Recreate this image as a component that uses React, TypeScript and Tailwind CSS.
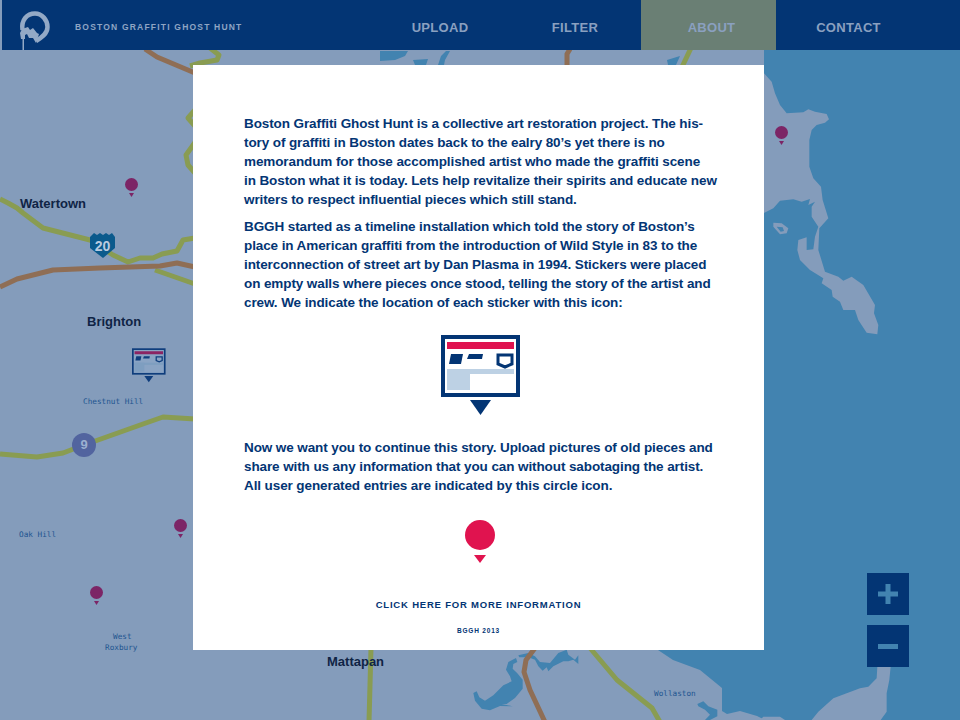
const navItems = [
  { label: "UPLOAD", cell: "w-[138px]" },
  { label: "FILTER", cell: "w-[132px]" },
  { label: "ABOUT", cell: "w-[135px] bg-[#6a7f74] pl-[6px] text-[#7d96b8]" },
  { label: "CONTACT", cell: "w-[145px]" },
];

const pins = [
  { id: 1, className: "left-[125px] top-[178px]" },
  { id: 2, className: "left-[775px] top-[126px]" },
  { id: 3, className: "left-[174px] top-[519px]" },
  { id: 4, className: "left-[90px] top-[586px]" },
];

const labels = [
  { text: "Chestnut Hill", className: "left-[83px] top-[397px]" },
  { text: "Oak Hill", className: "left-[19px] top-[530px]" },
  { text: "West", className: "left-[113px] top-[632px]" },
  { text: "Roxbury", className: "left-[105px] top-[643px]" },
  { text: "Wollaston", className: "left-[654px] top-[689px]" },
];

const towns = [
  { text: "Watertown", className: "left-[20px] top-[196px]" },
  { text: "Brighton", className: "left-[87px] top-[314px]" },
  { text: "Mattapan", className: "left-[327px] top-[654px]" },
];

const Logo = () => (
  <svg viewBox="0 0 52 50" className="h-[50px] w-[52px] shrink-0">
    <path
      d="M22.500 30 C21 20 27 13.500 35 13.500 C42 13.500 47.500 20 47.500 27 C47.500 34 41 38 36 41"
      fill="none"
      stroke="#93a9c6"
      strokeWidth="4.500"
    />
    <path
      d="M20 33 L22 29 L28 27 L30 30 L33 28 L37 33 L39 34 L36 43 L33 38 L29 38 L27 34 L25 35 L25 39 L21 39 Z"
      fill="#93a9c6"
    />
    <rect x="22.500" y="38" width="1.500" height="12" fill="#93a9c6" />
  </svg>
);

const Sticker = ({
  frame,
  bar,
  light,
  fill,
  className,
}: {
  frame: string;
  bar: string;
  light: string;
  fill: string;
  className: string;
}) => (
  <svg viewBox="0 0 80 81" className={className}>
    <rect x="2" y="2" width="75" height="58" fill={fill} stroke={frame} strokeWidth="4" />
    <rect x="6" y="7" width="67" height="7" fill={bar} />
    <rect x="6" y="34" width="67" height="5" fill={light} />
    <rect x="6" y="34" width="23" height="21" fill={light} />
    <path d="M8 29 L10 19 L22 19 L20 29 Z" fill={frame} />
    <path d="M26 24 L28 19 L42 19 L41 24 Z" fill={frame} />
    <path d="M57 20 H71 V29 L64 32 L57 29 Z" fill={fill} stroke={frame} strokeWidth="3" />
    <path d="M29 65 H50 L39.500 80 Z" fill={frame} />
  </svg>
);

const MapArt = () => (
  <svg viewBox="0 0 960 720" className="absolute inset-0 h-[720px] w-[960px]">
    <path
      d="M764 50 H960 V720 H765 L757 716 L740 711 L727 714 L722 711 L722 688 L700 670 L673 660 L658 650 H764 Z"
      fill="#4283b0"
    />
    <g transform="translate(760 50) scale(0.3333)" fill="#849cbb">
      <path d="M0 60 L12 70 L35 95 L45 130 L60 165 L80 190 L130 187 L145 178 L165 185 L200 192 L207 208 L195 218 L170 225 L155 240 L148 270 L148 350 L160 385 L183 410 L188 450 L205 505 L178 535 L175 600 L195 665 L235 680 L250 692 L275 680 L310 705 L345 765 L342 790 L355 825 L352 853 L320 848 L295 810 L285 780 L250 780 L240 755 L218 740 L215 720 L185 700 L190 685 L150 660 L120 630 L112 600 L115 570 L140 562 L140 600 L160 598 L165 560 L175 530 L155 500 L155 470 L165 455 L145 465 L150 447 L125 455 L100 448 L60 452 L40 475 L0 495 Z" />
      <path
        fillRule="evenodd"
        d="M40 518 L65 520 L85 535 L80 550 L60 553 L40 530 Z M50 530 L62 545 L72 543 L68 532 Z"
      />
    </g>
    <g transform="translate(760 520) scale(0.3333)" fill="#849cbb">
      <path d="M352 440 H392 L388 480 L380 520 L380 575 L362 600 H155 L175 575 L220 535 L300 505 L325 500 L350 475 Z" />
      <path d="M0 600 L10 590 L60 590 L75 600 Z" />
    </g>

    <g fill="#4283b0">
      <path d="M380 51 L408 51 L405 56 L395 60 L380 61 Z" />
      <path d="M413 60 L428 59 L426 65 L415 65 Z" />
      <path d="M438 65 L441 56 L446 51 L450 51 L445 60 L444 65 Z" />
      <path d="M667 60 L680 56 L676 65 L668 65 Z" />
      <g transform="translate(640 648) scale(0.3333)">
        <path d="M172 168 L190 160 L205 175 L232 185 L232 205 L210 216 L195 216 L210 200 L195 185 L175 175 Z" />
      </g>
      <g transform="translate(460 648) scale(0.3333)">
        <path d="M168 30 L172 42 L160 48 L158 62 L172 76 L188 95 L188 122 L165 150 L140 168 L125 168 L158 175 L120 174 L90 187 L65 182 L45 158 L40 135 L50 130 L58 148 L75 158 L100 142 L130 112 L155 100 L150 85 L138 65 L145 42 Z" />
        <path d="M175 22 L205 15 L225 25 L240 42 L270 45 L295 15 L320 5 L325 20 L345 35 L355 22 L355 48 L340 35 L325 40 L310 40 L280 55 L265 70 L260 58 L248 68 L235 55 L225 35 L205 28 L178 28 Z" />
      </g>
    </g>

    <g fill="none" stroke="#899c52" strokeWidth="5" strokeLinejoin="round">
      <path d="M210 48 L219 55 L217 60 L200 63 L190 66" />
      <path d="M195 110 L188 118 L195 126" />
      <path d="M196 141 L186 155 L188 165 L195 173" />
      <path d="M0 199 L8 203 L17 208 L23 213 L43 228 L90 240 L113 255 L128 262 L140 258 L153 258 L162 254 L177 251 L183 240 L195 238" />
      <path d="M155 270 L195 284" />
      <path d="M0 454 L37 457 L63 453 L84 445 L143 424 L163 417 L195 419" />
      <path d="M691 48 L682 67" />
      <path d="M371 648 L369 722" />
      <path d="M590 648 L617 680 L652 708 L660 722" />
    </g>
    <g fill="none" stroke="#8f6e55" strokeWidth="5" strokeLinejoin="round">
      <path d="M145 49 L157 57 L195 73" />
      <path d="M0 287 L17 279 L53 270 L100 268 L160 266 L177 263 L195 267" />
      <path d="M570 49 L567 54 L567 67" />
      <path d="M535 648 L526 660 L524 672 L530 690 L545 722" />
    </g>

    <path
      d="M94 233 L97 235 L100 233 L103 235 L106 233 L109 235 L112 233 L115 237 L115 248 L103 258 L90 248 L90 237 Z"
      fill="#0b5a8c"
    />
    <circle cx="84" cy="445" r="12" fill="#52649f" />
  </svg>
);

const MapPin = ({ className }: { className: string }) => (
  <div className={`absolute flex w-[13px] flex-col items-center ${className}`}>
    <div className="h-[13px] w-[13px] rounded-full bg-[#7c2566]" />
    <svg viewBox="0 0 5 4" className="mt-[2px] h-[4px] w-[5px]">
      <path d="M0 0 H5 L2.500 4 Z" fill="#7c2566" />
    </svg>
  </div>
);

const App = () => {
  return (
    <div className="relative h-[720px] w-[960px] overflow-hidden bg-[#849cbb] font-['Liberation_Sans',Arial,sans-serif]">
      <MapArt />

      <span className="absolute left-[90px] top-[238px] w-[25px] text-center text-[14px] font-bold leading-[16px] text-[#b9cbe0]">
        20
      </span>
      <span className="absolute left-[72px] top-[437px] w-[24px] text-center text-[13px] font-bold leading-[16px] text-[#9cb0d0]">
        9
      </span>

      {towns.map((t) => (
        <span
          key={t.text}
          className={`absolute text-[13px] font-bold leading-[16px] text-[#0f2445] ${t.className}`}
        >
          {t.text}
        </span>
      ))}
      {labels.map((l) => (
        <span
          key={l.text}
          className={`absolute font-['DejaVu_Sans_Mono',monospace] text-[7.700px] leading-[10px] text-[#1e5490] ${l.className}`}
        >
          {l.text}
        </span>
      ))}
      {pins.map((p) => (
        <MapPin key={p.id} className={p.className} />
      ))}
      <Sticker
        frame="#0e3d7c"
        bar="#8b2463"
        light="#7e9ec0"
        fill="#8aa4c4"
        className="absolute left-[132px] top-[348px] h-[35px] w-[34px]"
      />

      <header className="relative ml-[2px] flex h-[50px] items-center bg-[#033574]">
        <div className="ml-[-2px]">
          <Logo />
        </div>
        <span className="ml-[23px] w-[296px] whitespace-nowrap pt-[5px] text-[8.500px] font-bold tracking-[1.200px] text-[#8fa5c4]">
          BOSTON GRAFFITI GHOST HUNT
        </span>
        <nav className="flex h-full">
          {navItems.map((item) => (
            <a
              key={item.label}
              className={`flex h-full items-center justify-center pt-[5px] text-[13px] font-bold tracking-[0.300px] text-[#8aa0c0] ${item.cell}`}
            >
              {item.label}
            </a>
          ))}
        </nav>
      </header>

      <main className="relative ml-[193px] mt-[15px] h-[585px] w-[571px] bg-white pl-[51px] pt-[49px] text-[#033574]">
        <div className="whitespace-nowrap text-[13.500px] font-bold leading-[19px] tracking-[-0.100px]">
          <p>
            Boston Graffiti Ghost Hunt is a collective art restoration project. The his-
            <br />
            tory of graffiti in Boston dates back to the ealry 80’s yet there is no
            <br />
            memorandum for those accomplished artist who made the graffiti scene
            <br />
            in Boston what it is today. Lets help revitalize their spirits and educate new
            <br />
            writers to respect influential pieces which still stand.
          </p>
          <p className="mt-[8px]">
            BGGH started as a timeline installation which told the story of Boston’s
            <br />
            place in American graffiti from the introduction of Wild Style in 83 to the
            <br />
            interconnection of street art by Dan Plasma in 1994. Stickers were placed
            <br />
            on empty walls where pieces once stood, telling the story of the artist and
            <br />
            crew. We indicate the location of each sticker with this icon:
          </p>
        </div>

        <Sticker
          frame="#033574"
          bar="#e0134f"
          light="#bdd1e4"
          fill="#ffffff"
          className="ml-[197px] mt-[23px] h-[81px] w-[80px]"
        />

        <p className="mt-[22px] whitespace-nowrap text-[13.500px] font-bold leading-[19px] tracking-[-0.100px]">
          Now we want you to continue this story. Upload pictures of old pieces and
          <br />
          share with us any information that you can without sabotaging the artist.
          <br />
          All user generated entries are indicated by this circle icon.
        </p>

        <div className="ml-[221px] mt-[25px] flex w-[30px] flex-col items-center">
          <div className="h-[30px] w-[30px] rounded-full bg-[#e0134f]" />
          <svg viewBox="0 0 12 8" className="mt-[5px] h-[8px] w-[12px]">
            <path d="M0 0 H12 L6 8 Z" fill="#e0134f" />
          </svg>
        </div>

        <p className="ml-[-51px] mt-[35px] w-[571px] text-center text-[9.500px] font-bold leading-[14px] tracking-[0.800px]">
          CLICK HERE FOR MORE INFORMATION
        </p>
        <p className="ml-[-51px] mt-[14px] w-[571px] text-center text-[6.500px] font-bold leading-[10px] tracking-[0.800px]">
          BGGH 2013
        </p>
      </main>

      <div className="absolute left-[867px] top-[573px] flex flex-col gap-[10px]">
        <button className="flex h-[42px] w-[42px] items-center justify-center bg-[#033574]">
          <svg viewBox="0 0 20 20" className="h-[20px] w-[20px]">
            <path d="M0 7.500 H7.500 V0 H12.500 V7.500 H20 V12.500 H12.500 V20 H7.500 V12.500 H0 Z" fill="#4283b0" />
          </svg>
        </button>
        <button className="flex h-[42px] w-[42px] items-center justify-center bg-[#033574]">
          <span className="h-[5px] w-[20px] bg-[#4283b0]" />
        </button>
      </div>
    </div>
  );
};

export default App;
